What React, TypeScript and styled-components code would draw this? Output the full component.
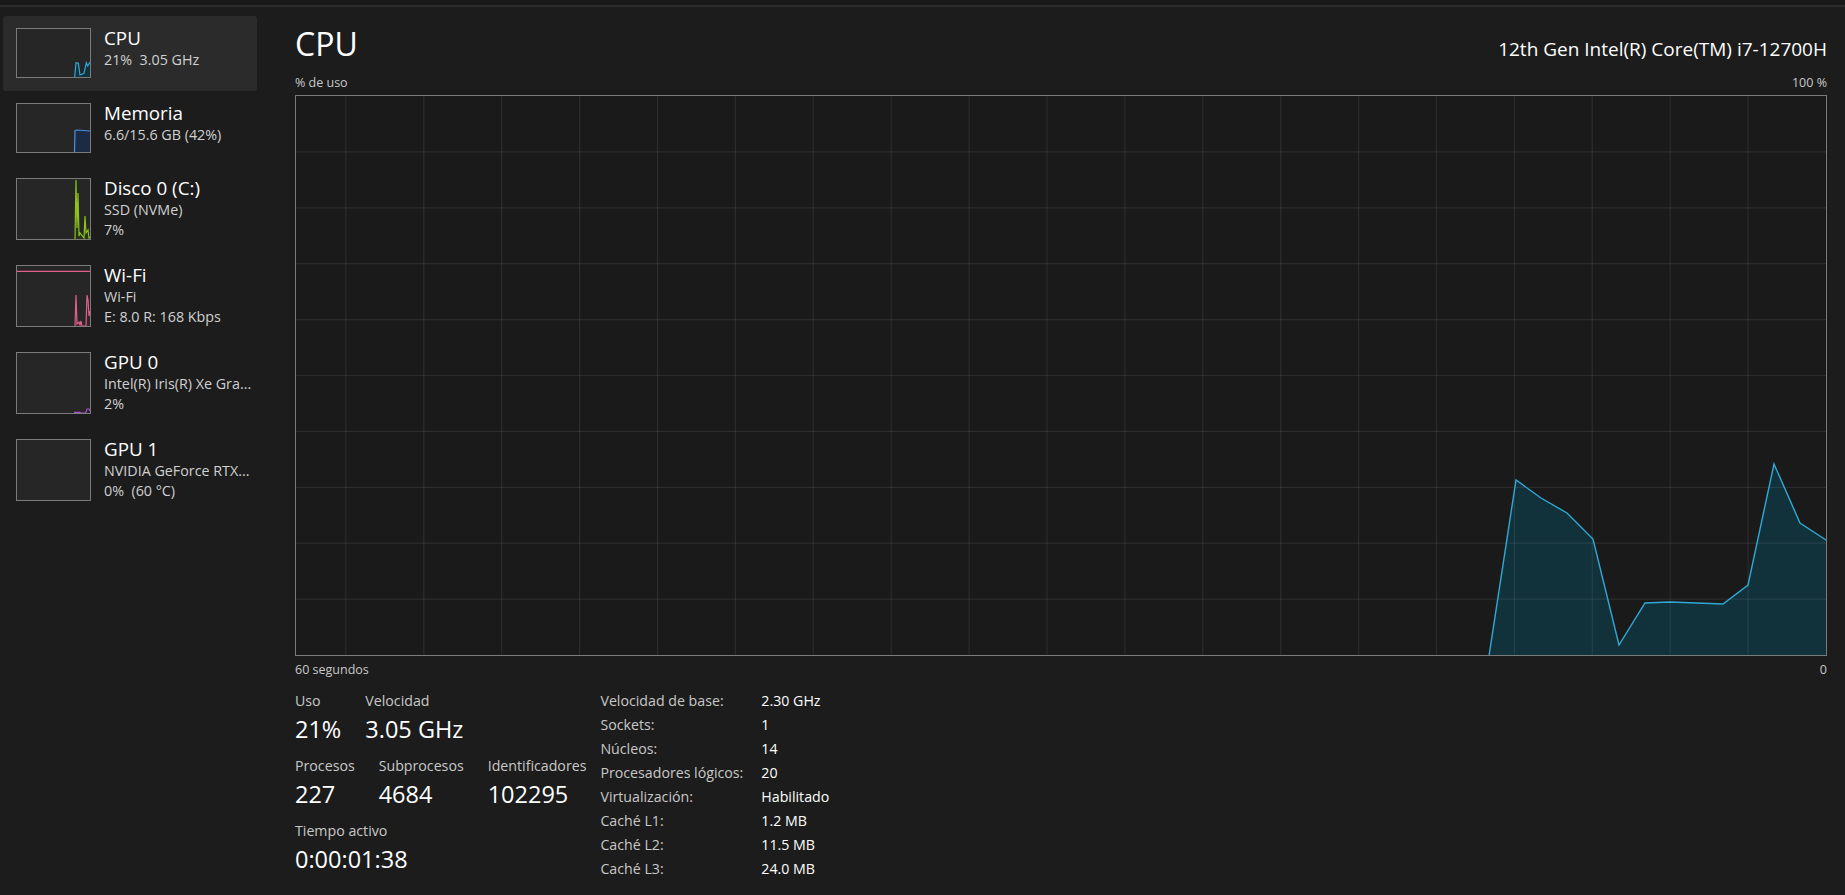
import React from "react";
import styled, { createGlobalStyle } from "styled-components";

const GlobalStyle = createGlobalStyle`
  html, body {
    margin: 0;
    padding: 0;
    background: #1c1c1c;
    font-family: "Segoe UI", "Open Sans", "Noto Sans", sans-serif;
    color: #ffffff;
    overflow: hidden;
  }
`;

const Window = styled.div`
  width: 1845px;
  height: 895px;
  display: flex;
  flex-direction: column;
  background: #1c1c1c;
`;

const TopEdge = styled.div`
  height: 5px;
  background: #191919;
  border-bottom: 2px solid #2b2b2b;
`;

const Body = styled.div`
  flex: 1;
  display: flex;
`;

const Sidebar = styled.nav`
  width: 257px;
  padding: 9px 0 0 3px;
  display: flex;
  flex-direction: column;
`;

const Item = styled.div<{ $active?: boolean }>`
  width: 254px;
  box-sizing: border-box;
  padding: 12px 0 13px 13px;
  display: flex;
  align-items: flex-start;
  gap: 13px;
  border-radius: 3px;
  background: ${({ $active }) => ($active ? "#2b2b2b" : "transparent")};
`;

const Thumb = styled.div<{ $tall?: boolean }>`
  width: 75px;
  height: ${({ $tall }) => ($tall ? 62 : 50)}px;
  box-sizing: border-box;
  border: 1px solid #7b7b7b;
  background: #262626;
  flex-shrink: 0;
  overflow: hidden;

  svg {
    display: block;
    width: 100%;
    height: 100%;
  }
`;

const ItemText = styled.div`
  display: flex;
  flex-direction: column;
  margin-top: -2px;
  margin-bottom: -2px;
  white-space: pre;
`;

const ItemTitle = styled.div`
  font-size: 18.8px;
  line-height: 24px;
  color: #ffffff;
`;

const ItemSub = styled.div`
  font-size: 14.3px;
  line-height: 20px;
  color: #d0d0d0;
`;

const Main = styled.main`
  flex: 1;
  padding: 0 18px 0 35px;
  display: flex;
  flex-direction: column;
`;

const Header = styled.div`
  margin-top: 16px;
  display: flex;
  justify-content: space-between;
  align-items: baseline;
`;

const Title = styled.h1`
  margin: 0;
  font-size: 32px;
  font-weight: 400;
  line-height: 42px;
`;

const Model = styled.div`
  font-size: 19px;
  line-height: 24px;
  color: #ffffff;
`;

const AxisRow = styled.div<{ $top: number }>`
  margin-top: ${({ $top }) => $top}px;
  display: flex;
  justify-content: space-between;
  font-size: 12.5px;
  line-height: 15px;
  color: #c8c8c8;
`;

const Chart = styled.div`
  margin-top: 5px;
  height: 561px;
  box-sizing: border-box;
  border: 1px solid #7b7b7b;
  background: #1a1a1a;

  svg {
    display: block;
    width: 100%;
    height: 100%;
  }
`;

const Details = styled.div`
  margin-top: 14px;
  display: flex;
  align-items: flex-start;
  gap: 14px;
`;

const Stats = styled.div`
  display: flex;
  flex-direction: column;
  gap: 12px;
`;

const StatRow = styled.div`
  display: flex;
  gap: 24px;
`;

const Stat = styled.div`
  display: flex;
  flex-direction: column;
  gap: 4px;
`;

const StatLabel = styled.div`
  font-size: 14.2px;
  line-height: 19px;
  color: #c8c8c8;
`;

const StatValue = styled.div`
  font-size: 23.5px;
  line-height: 30px;
  color: #ffffff;
`;

const InfoTable = styled.div`
  margin-top: -2px;
  display: grid;
  grid-template-columns: auto auto;
  column-gap: 18px;
  grid-auto-rows: 24px;
  font-size: 14.2px;
  line-height: 24px;
`;

const InfoLabel = styled.div`
  color: #c8c8c8;
`;

const InfoValue = styled.div`
  color: #ffffff;
`;

const W = 1530;
const H = 559;

const cpuPoints: [number, number][] = [
  [1193, 560],
  [1220, 384],
  [1245, 402],
  [1271, 417],
  [1297, 443],
  [1323, 549],
  [1349, 507],
  [1374, 506],
  [1427, 508],
  [1452, 489],
  [1478, 368],
  [1504, 427],
  [1530, 444],
];

const CpuChart = () => {
  const vLines: number[] = [];
  for (let k = 1; k <= 19; k++) vLines.push(W - k * 77.9);
  const hLines: number[] = [];
  for (let k = 1; k <= 9; k++) hLines.push(k * (H / 10));
  const line = cpuPoints.map(([x, y]) => `${x},${y}`).join(" ");
  const area = `${cpuPoints[0][0]},${H} ${line} ${W},${H}`;
  return (
    <svg viewBox={`0 0 ${W} ${H}`} preserveAspectRatio="none">
      <polygon points={area} fill="#11313b" />
      {vLines.map((x) => (
        <line key={`v${x}`} x1={x} y1={0} x2={x} y2={H} stroke="rgba(255,255,255,0.08)" strokeWidth={1.2} />
      ))}
      {hLines.map((y) => (
        <line key={`h${y}`} x1={0} y1={y} x2={W} y2={y} stroke="rgba(255,255,255,0.08)" strokeWidth={1.2} />
      ))}
      <polyline points={line} fill="none" stroke="#31a9d6" strokeWidth={1.4} />
    </svg>
  );
};

type Spark = { pts: [number, number][]; stroke: string; fill?: string; extra?: React.ReactNode };

const Sparkline = ({ pts, stroke, fill, extra, h }: Spark & { h: number }) => {
  const line = pts.map(([x, y]) => `${x},${y}`).join(" ");
  const area = pts.length ? `${pts[0][0]},${h} ${line} ${pts[pts.length - 1][0]},${h}` : "";
  return (
    <svg viewBox={`0 0 73 ${h}`} preserveAspectRatio="none">
      {extra}
      {fill && pts.length > 0 && <polygon points={area} fill={fill} />}
      {pts.length > 0 && <polyline points={line} fill="none" stroke={stroke} strokeWidth={1.2} />}
    </svg>
  );
};

interface Device {
  title: string;
  lines: string[];
  active?: boolean;
  spark: Spark;
}

const devices: Device[] = [
  {
    title: "CPU",
    lines: ["21%  3.05 GHz"],
    active: true,
    spark: {
      pts: [[57.7, 48], [59, 33.7], [61.3, 34.3], [63, 46], [67, 44.3], [69.3, 33.7], [70.7, 37], [73, 33]],
      stroke: "#31a9d6",
      fill: "#11313b",
    },
  },
  {
    title: "Memoria",
    lines: ["6.6/15.6 GB (42%)"],
    spark: {
      pts: [[57.5, 48], [58, 26.7], [60, 26], [73, 27]],
      stroke: "#4d8fe0",
      fill: "#1b2b44",
    },
  },
  {
    title: "Disco 0 (C:)",
    lines: ["SSD (NVMe)", "7%"],
    spark: {
      pts: [[58, 60], [59, 1], [60, 49], [61, 14], [62, 57], [63, 54], [67, 59], [68, 37], [69, 54], [71, 51], [72, 59], [73, 58]],
      stroke: "#8cc220",
      fill: "#26321a",
    },
  },
  {
    title: "Wi-Fi",
    lines: ["Wi-Fi", "E: 8.0 R: 168 Kbps"],
    spark: {
      pts: [[58, 60], [59, 29], [60, 58], [62, 56], [63, 59], [64, 55], [65, 60], [69, 60], [70, 29], [71, 34], [72, 50], [73, 45]],
      stroke: "#e0608c",
      fill: "#3a2029",
      extra: <line x1={0} y1={5.3} x2={73} y2={5.3} stroke="#e0608c" strokeWidth={1.2} />,
    },
  },
  {
    title: "GPU 0",
    lines: ["Intel(R) Iris(R) Xe Gra...", "2%"],
    spark: {
      pts: [[57, 59.3], [63, 59.3], [64, 60], [68, 60], [69, 59], [70, 56], [72, 56], [73, 58]],
      stroke: "#b04ad0",
    },
  },
  {
    title: "GPU 1",
    lines: ["NVIDIA GeForce RTX...", "0%  (60 °C)"],
    spark: { pts: [], stroke: "#b04ad0" },
  },
];

const stats = [
  [
    { label: "Uso", value: "21%" },
    { label: "Velocidad", value: "3.05 GHz" },
  ],
  [
    { label: "Procesos", value: "227" },
    { label: "Subprocesos", value: "4684" },
    { label: "Identificadores", value: "102295" },
  ],
  [{ label: "Tiempo activo", value: "0:00:01:38" }],
];

const info: [string, string][] = [
  ["Velocidad de base:", "2.30 GHz"],
  ["Sockets:", "1"],
  ["Núcleos:", "14"],
  ["Procesadores lógicos:", "20"],
  ["Virtualización:", "Habilitado"],
  ["Caché L1:", "1.2 MB"],
  ["Caché L2:", "11.5 MB"],
  ["Caché L3:", "24.0 MB"],
];

export default function App() {
  return (
    <Window>
      <GlobalStyle />
      <TopEdge />
      <Body>
        <Sidebar>
          {devices.map((d) => {
            const tall = d.lines.length > 1;
            return (
              <Item key={d.title} $active={d.active}>
                <Thumb $tall={tall}>
                  <Sparkline {...d.spark} h={tall ? 60 : 48} />
                </Thumb>
                <ItemText>
                  <ItemTitle>{d.title}</ItemTitle>
                  {d.lines.map((l) => (
                    <ItemSub key={l}>{l}</ItemSub>
                  ))}
                </ItemText>
              </Item>
            );
          })}
        </Sidebar>
        <Main>
          <Header>
            <Title>CPU</Title>
            <Model>12th Gen Intel(R) Core(TM) i7-12700H</Model>
          </Header>
          <AxisRow $top={10}>
            <span>% de uso</span>
            <span>100 %</span>
          </AxisRow>
          <Chart>
            <CpuChart />
          </Chart>
          <AxisRow $top={6}>
            <span>60 segundos</span>
            <span>0</span>
          </AxisRow>
          <Details>
            <Stats>
              {stats.map((row, i) => (
                <StatRow key={i}>
                  {row.map((s) => (
                    <Stat key={s.label}>
                      <StatLabel>{s.label}</StatLabel>
                      <StatValue>{s.value}</StatValue>
                    </Stat>
                  ))}
                </StatRow>
              ))}
            </Stats>
            <InfoTable>
              {info.map(([k, v]) => (
                <React.Fragment key={k}>
                  <InfoLabel>{k}</InfoLabel>
                  <InfoValue>{v}</InfoValue>
                </React.Fragment>
              ))}
            </InfoTable>
          </Details>
        </Main>
      </Body>
    </Window>
  );
}
